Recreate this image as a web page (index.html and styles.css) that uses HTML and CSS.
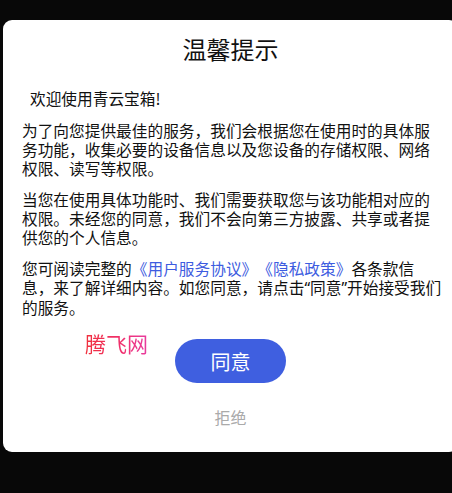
FILE: index.html
```html
<!DOCTYPE html>
<html lang="zh">
<head>
<meta charset="utf-8">
<link rel="stylesheet" href="styles.css">
</head>
<body>
<div class="dialog">
  <h1 class="title">温馨提示</h1>
  <div class="content">
    <p class="welcome">欢迎使用青云宝箱!</p>
    <p>为了向您提供最佳的服务，我们会根据您在使用时的具体服务功能，收集必要的设备信息以及您设备的存储权限、网络权限、读写等权限。</p>
    <p>当您在使用具体功能时、我们需要获取您与该功能相对应的权限。未经您的同意，我们不会向第三方披露、共享或者提供您的个人信息。</p>
    <p>您可阅读完整的<span class="link">《用户服务协议》《隐私政策》</span>各条款信息，来了解详细内容。如您同意，请点击<span class="q">“</span>同意<span class="q">”</span>开始接受我们的服务。</p>
  </div>
  <div class="actions">
    <span class="watermark">腾飞网</span>
    <button class="agree">同意</button>
    <button class="refuse">拒绝</button>
  </div>
</div>
</body>
</html>
```
FILE: styles.css
```css
html, body {
  margin: 0;
  padding: 0;
  background: #080808;
  width: 452px;
  height: 493px;
  overflow: hidden;
}
body {
  font-family: "Noto Sans CJK SC", "Noto Sans", sans-serif;
  color: #111;
}
.dialog {
  margin: 20px 0 0 3px;
  width: 455px;
  height: 432px;
  background: #fff;
  border-radius: 9px;
  box-sizing: border-box;
  padding-top: 13px;
}
.title {
  margin: 0;
  text-align: center;
  font-size: 24px;
  font-weight: 400;
  line-height: 32px;
  color: #111;
}
.content {
  width: 421px;
  margin: 24px 0 0 19px;
  font-size: 15.7px;
  line-height: 19px;
  text-spacing-trim: space-all;
}
.content p {
  margin: 0 0 12px;
}
.content p.welcome {
  margin: 0 0 13px 8px;
}
.link {
  color: #3d5ce0;
}
.q {
  font-family: "Noto Sans", sans-serif;
}
.actions {
  position: relative;
  display: flex;
  flex-direction: column;
  align-items: center;
  margin-top: 22px;
}
.watermark {
  position: absolute;
  left: 82px;
  top: -9px;
  font-size: 21px;
  line-height: 26px;
  background: linear-gradient(90deg, #f0303c, #f03070 60%, #e83ca0);
  -webkit-background-clip: text;
  background-clip: text;
  color: transparent;
}
.agree {
  width: 111px;
  height: 44px;
  border: none;
  border-radius: 22px;
  background: #3f5fe0;
  color: #fff;
  font-family: inherit;
  font-size: 20px;
  padding: 0;
}
.refuse {
  margin-top: 23px;
  border: none;
  background: none;
  color: #aaa;
  font-family: inherit;
  font-size: 16px;
  line-height: 22px;
  padding: 0;
}
```
